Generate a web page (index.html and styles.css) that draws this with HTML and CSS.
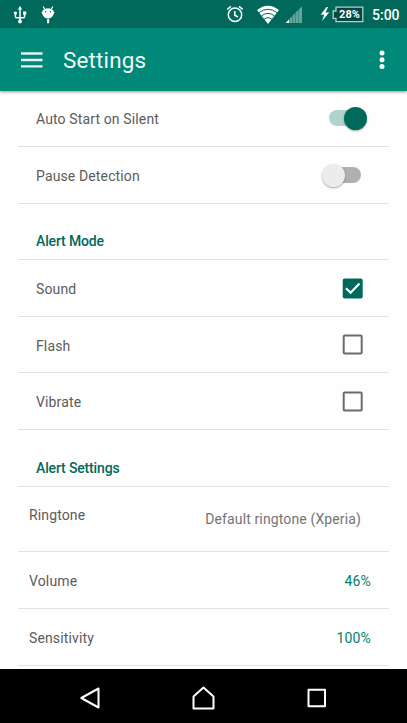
FILE: index.html
```html
<!DOCTYPE html>
<html lang="en">
<head>
<meta charset="utf-8">
<title>Settings</title>
<link rel="stylesheet" href="styles.css">
</head>
<body>
<div class="status">
  <svg class="usb" width="14" height="18" viewBox="0 0 14 18" fill="none" stroke="#fff" stroke-width="1.5"><path d="M7 3v12M2.400 7.500v3q0 1.200 1.200 1.200h6.800q1.200 0 1.200-1.200v-3"/><path d="M7 0l2.200 3.600H4.800z" fill="#fff" stroke="none"/><circle cx="7" cy="15.500" r="1.900" fill="#fff" stroke="none"/><circle cx="2.400" cy="7" r="1.600" fill="#fff" stroke="none"/><path d="M10 5.500h3.200v3.200H10z" fill="#fff" stroke="none"/></svg>
  <svg class="droid" width="14" height="18" viewBox="0 0 14 18"><path d="M2.200 .7L4 3.500M11.800 .7L10 3.500" stroke="#fff" stroke-width="1.300"/><path d="M2 4Q7 .5 12 4L13.300 6.500 12.300 9Q10.500 12.600 7 12.600T1.700 9L.7 6.500z" fill="#fff"/><circle cx="4.500" cy="5.700" r=".7" fill="#00695c"/><circle cx="9.500" cy="5.700" r=".7" fill="#00695c"/><path d="M6.100 13.100h2v4.200h-2z" fill="#fff"/></svg>
  <span class="spacer"></span>
  <svg class="alarm" width="18" height="18" viewBox="0 0 18 18" fill="none" stroke="#fff" stroke-width="1.500"><circle cx="9" cy="9.800" r="6.700"/><path d="M1.300 4.300l3.600-3M16.700 4.300l-3.600-3M8.800 6v4.200l3.200 1.800"/></svg>
  <svg class="wifi" width="24" height="20" viewBox="0 0 24 20"><path d="M1 5Q12-3.500 23 5L12 19z" fill="#fff"/><path d="M2.800 7.700Q12 .8 21.200 7.700M5.400 11Q12 5.700 18.600 11M8 14.300Q12 11 16 14.300" fill="none" stroke="#00695c" stroke-width="1"/></svg>
  <svg class="signal" width="18" height="18" viewBox="0 0 18 18"><path d="M.5 17L4 13.500V17z" fill="#fff"/><path d="M4.200 13L7 10.500V17H4.200zM7.400 9.800l2.800-2.500V17H7.400zM10.600 6.600l2.800-2.500V17h-2.800zM13.800 3.400L17 .2V17h-3.200z" fill="#64a49b"/></svg>
  <svg class="bolt" width="10" height="14" viewBox="0 0 10 14"><path d="M6.500 0L.7 7.700l3.600-.3L2 14l7.300-8.700-3.800.4L8 0z" fill="#fff"/></svg>
  <div class="battery"><svg width="32" height="17" viewBox="0 0 32 17"><path d="M4 1.200h26.800v14.400H4v-3.300H1.200V5H4z" fill="#05483f" stroke="#b9ccc8" stroke-width="1.300"/></svg><span class="charge">28%</span></div>
  <span class="clock">5:00</span>
</div>
<header class="appbar">
  <svg width="22" height="16" viewBox="0 0 22 16"><path d="M0 1.500h21.500M0 8h21.500M0 14.300h21.500" stroke="#e9f4f2" stroke-width="2.300"/></svg>
  <h1>Settings</h1>
  <svg width="6" height="20" viewBox="0 0 6 20" fill="#fff"><circle cx="3" cy="3" r="2.500"/><circle cx="3" cy="9.800" r="2.500"/><circle cx="3" cy="16.500" r="2.500"/></svg>
</header>
<main class="list">
  <div class="row short first"><span>Auto Start on Silent</span><span class="switch on"><i class="track"></i><i class="thumb"></i></span></div>
  <div class="row pause"><span>Pause Detection</span><span class="switch"><i class="track"></i><i class="thumb"></i></span></div>
  <h2 class="row short section">Alert Mode</h2>
  <div class="row"><span>Sound</span><span class="check checked"><svg width="20" height="20" viewBox="0 0 20 20"><path d="M3.300 9.800l4.600 4.600 8.900-9.300" fill="none" stroke="#fff" stroke-width="2.200"/></svg></span></div>
  <div class="row short"><span>Flash</span><span class="check raised"></span></div>
  <div class="row"><span>Vibrate</span><span class="check"></span></div>
  <h2 class="row section">Alert Settings</h2>
  <div class="row detail ringtone"><span>Ringtone</span><span class="tone">Default ringtone (Xperia)</span></div>
  <div class="row detail"><span>Volume</span><span class="value">46%</span></div>
  <div class="row detail"><span>Sensitivity</span><span class="value">100%</span></div>
</main>
<nav class="nav">
  <svg width="22" height="24" viewBox="0 0 22 24"><path d="M19.500 2.500v19L2.300 12z"/></svg>
  <svg width="26" height="26" viewBox="0 0 26 26"><path d="M2.500 11.500L12.500 2.500l10 9v12h-20z"/></svg>
  <svg width="22" height="22" viewBox="0 0 22 22"><path d="M2.500 2.800h16.500v16.500H2.500z"/></svg>
</nav>
</body>
</html>
```
FILE: styles.css
```css
* { box-sizing: border-box; }
body {
  margin: 0;
  height: 723px;
  display: flex;
  flex-direction: column;
  overflow: hidden;
  background: #fefefe;
  color: #5c5c5c;
  font: 14px/20px Roboto, sans-serif;
  letter-spacing: .13px;
}
svg { display: block; flex: none; }
.status {
  flex: none;
  height: 28px;
  display: flex;
  align-items: center;
  padding: 0 8px 0 13px;
  background: #00695c;
  color: #fff;
  letter-spacing: 0;
}
.usb { margin-top: 2px; }
.droid { margin: 1px 0 0 14px; }
.spacer { flex: 1; }
.wifi { margin: 1px 0 0 12px; }
.signal { margin: 2px 0 0 5px; }
.bolt { margin: 0 2px 0 17px; }
.battery { display: grid; width: 32px; place-items: center; }
.battery > * { grid-area: 1 / 1; }
.charge { padding-left: 3px; font-size: 11px; font-weight: 700; line-height: 17px; }
.clock { width: 27px; margin-left: 8px; padding-top: 1px; font-size: 14px; font-weight: 500; white-space: nowrap; }
.appbar {
  flex: none;
  height: 63px;
  display: flex;
  align-items: center;
  padding: 1px 22px 0 21px;
  background: #008978;
  color: #f2faf8;
  box-shadow: 0 1px 3px rgba(0, 0, 0, .42);
  z-index: 1;
}
.appbar h1 { flex: 1; margin: 0 0 1px 20px; font-size: 22.400px; line-height: 30px; font-weight: 400; letter-spacing: .2px; }
.list { flex: 1; margin: 0 18px; }
.row {
  height: 57px;
  display: flex;
  align-items: center;
  justify-content: space-between;
  margin: 0;
  padding: 2px 26px 0 18px;
  border-bottom: 1px solid #e2e2e2;
}
.row.short { height: 56px; }
.row.first { padding-top: 0; }
.row.pause { padding-top: 1px; }
.row.section { padding-top: 19px; color: #00695c; font-size: 14px; font-weight: 500; letter-spacing: -.15px; }
.switch { position: relative; width: 42px; height: 24px; }
.track { position: absolute; left: 8px; top: 3px; width: 32px; height: 16px; border-radius: 8px; background: #b0b0b0; }
.thumb { position: absolute; left: 1px; top: 0; width: 23px; height: 23px; border-radius: 50%; background: #ececec; box-shadow: 0 1px 2px rgba(0, 0, 0, .35); }
.on .track { background: #b0d3ce; }
.on .thumb { left: 23px; background: #00695c; }
.check { width: 20px; height: 20px; border: 2px solid #6b6b6b; border-radius: 2px; transform: translate(-.3px, -.6px); }
.check.checked { border: 0; background: #00695c; }
.check.raised { transform: translate(-.3px, -1.4px); }
.row.detail { padding: 2px 18px 0 11px; }
.row.ringtone { height: 65px; padding: 0 28px 8px 11px; }
.tone { padding-top: 8px; color: #747474; }
.value { color: #008270; }
.nav {
  flex: none;
  height: 54px;
  display: flex;
  align-items: center;
  justify-content: space-between;
  padding: 3px 79px 0 79px;
  background: #000;
}
.nav path { fill: none; stroke: #fff; stroke-width: 2; stroke-linejoin: round; }
```
